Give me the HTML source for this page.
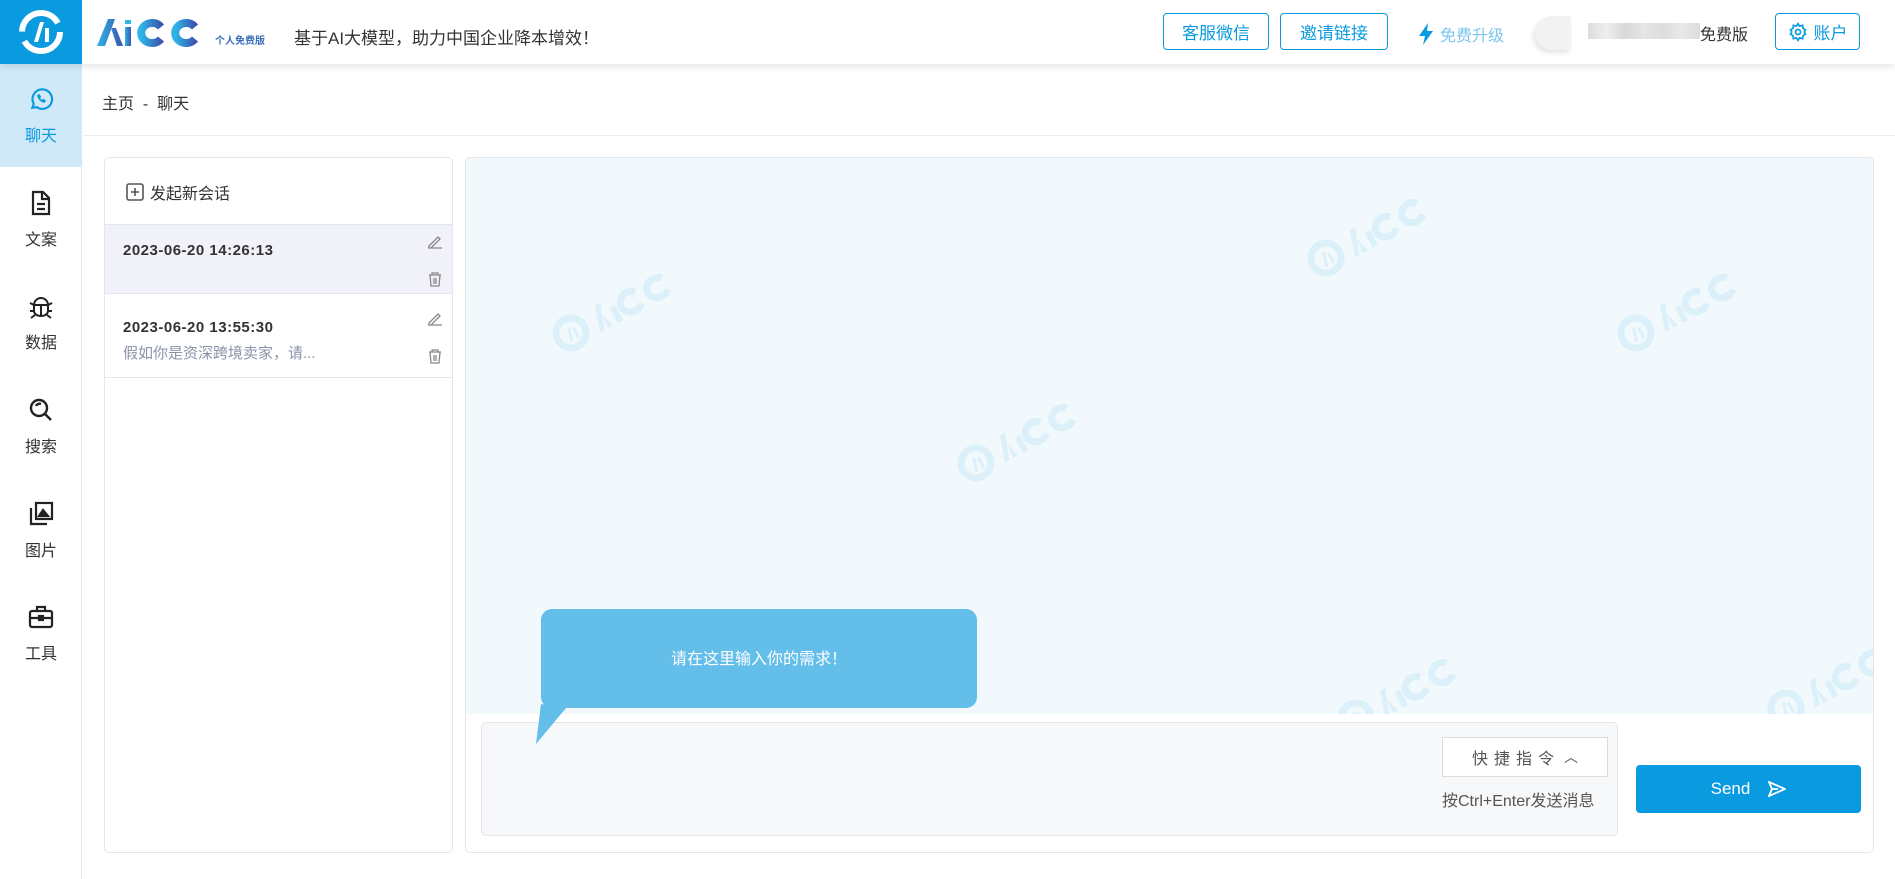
<!DOCTYPE html>
<html><head><meta charset="utf-8">
<style>
*{margin:0;padding:0;box-sizing:border-box}
body{width:1895px;height:879px;overflow:hidden;background:#fff;font-family:"Liberation Sans","Noto Sans CJK SC",sans-serif;color:#333;position:relative}
.abs{position:absolute}
.hdr{left:0;top:0;width:1895px;height:64px;background:#fff;box-shadow:0 2px 8px rgba(0,0,0,.12);z-index:5}
.btn{position:absolute;top:13px;height:37px;border:1px solid #0a9ae0;border-radius:4px;color:#0a9ae0;font-size:17px;display:flex;align-items:center;justify-content:center}
.side{left:0;top:64px;width:82px;height:815px;background:#fff;border-right:1px solid #e8e8e8}
.si{position:absolute;left:0;width:82px;text-align:center;font-size:16px;color:#333}
.si svg{display:block;margin:0 auto 10px}
</style></head><body>

<div class="abs hdr">
  <div class="abs" style="left:0;top:0;width:82px;height:64px;background:#0a9ae0">
    <svg width="82" height="64" viewBox="0 0 82 64"><circle cx="41" cy="32" r="19" fill="none" stroke="#fff" stroke-width="6" stroke-dasharray="50 10 50 10"/><path d="M34 42 L40 22 L44 22 L38 42Z M45 28h4v14h-4z" fill="#fff"/></svg>
  </div>
  <svg class="abs" style="left:97px;top:16px" width="112" height="34" viewBox="0 0 112 34">
    <defs><linearGradient id="g" x1="0" x2="1"><stop offset="0" stop-color="#2fb4e6"/><stop offset="1" stop-color="#3b55b0"/></linearGradient></defs>
    <path d="M0 30 L11 3 L18 3 L8 30Z M14 12 L20 30 L26 30 L19 12Z" fill="url(#g)"/>
    <rect x="28" y="4" width="6" height="4" fill="#2fb4e6"/><rect x="28" y="11" width="6" height="19" fill="url(#g)"/>
    <path d="M64 11 A11 10 0 1 0 64 23" fill="none" stroke="url(#g)" stroke-width="8"/>
    <path d="M98 11 A11 10 0 1 0 98 23" fill="none" stroke="url(#g)" stroke-width="8"/>
  </svg>
  <div class="abs" style="left:215px;top:32px;font-size:10px;color:#3b6fb8;font-weight:bold">个人免费版</div>
  <div class="abs" style="left:294px;top:24px;font-size:17px;color:#333">基于AI大模型，助力中国企业降本增效！</div>
  <div class="btn" style="left:1163px;width:106px">客服微信</div>
  <div class="btn" style="left:1280px;width:108px">邀请链接</div>
  <div class="abs" style="left:1418px;top:22px;font-size:16px;color:#7cc6ee;display:flex;align-items:center"><svg width="16" height="22" viewBox="0 0 16 22"><path d="M10 0 L1 13 H7 L5 22 L15 8 H9Z" fill="#0a9ae0"/></svg><span style="margin-left:6px">免费升级</span></div>
  <div class="abs" style="left:1535px;top:16px;width:36px;height:34px;border-radius:17px 0 0 17px;background:#f2f2f2;box-shadow:-2px 3px 5px rgba(0,0,0,.1)"></div>
  <div class="abs" style="left:1588px;top:23px;width:112px;height:16px;background:linear-gradient(90deg,#ddd,#eee,#d8d8d8,#e6e6e6,#ddd,#e8e8e8,#ddd)"></div>
  <div class="abs" style="left:1700px;top:21px;font-size:16px;color:#333">免费版</div>
  <div class="btn" style="left:1775px;width:85px"><svg width="20" height="20" viewBox="0 0 24 24" fill="none" stroke="#0a9ae0" stroke-width="2"><circle cx="12" cy="12" r="3"/><path d="M12 2l2 3 3.5-1 .5 3.5 3 2-1.5 2.5 1.5 2.5-3 2-.5 3.5-3.5-1-2 3-2-3-3.5 1-.5-3.5-3-2L4.5 12 3 9.5l3-2L6.5 4 10 5z"/></svg><span style="margin-left:6px">账户</span></div>
</div>

<div class="abs side">
  <div class="abs" style="left:0;top:0;width:82px;height:103px;background:#cfe9f8"></div>
  <div class="si" style="top:22px;color:#0a9ae0"><svg width="26" height="26" viewBox="0 0 24 24" fill="none" stroke="#0a9ae0" stroke-width="2"><path d="M4 20l1.3-3.5A9 9 0 1 1 8 19.5Z"/><path d="M9 8.5c0 3 3 6 6 6.5l1-1.5-2-1-1 1c-1-.5-2-1.5-2.5-2.5l1-1-1-2Z" fill="#0a9ae0" stroke-width="1"/></svg>聊天</div>
  <div class="si" style="top:126px"><svg width="24" height="26" viewBox="0 0 24 26" fill="none" stroke="#222" stroke-width="2.2"><path d="M4 2h10l6 6v16H4Z"/><path d="M13 2v7h7M8 14h8M8 19h8"/></svg>文案</div>
  <div class="si" style="top:229px"><svg width="26" height="26" viewBox="0 0 26 26" fill="none" stroke="#222" stroke-width="2"><path d="M6 12a7 7 0 0 1 14 0v6a7 5 0 0 1-14 0Z"/><path d="M6 12h14M13 12v11M2 10l4 2M24 10l-4 2M2 18h4M24 18h-4M3 25l4-3M23 25l-4-3"/></svg>数据</div>
  <div class="si" style="top:333px"><svg width="26" height="26" viewBox="0 0 26 26" fill="none" stroke="#222" stroke-width="2.4"><circle cx="11" cy="11" r="8"/><path d="M17 17l6 6M8 9a4 4 0 0 1 5-2"/></svg>搜索</div>
  <div class="si" style="top:437px"><svg width="26" height="26" viewBox="0 0 26 26" fill="none" stroke="#222" stroke-width="2.2"><rect x="8" y="2" width="16" height="16"/><path d="M3 7v16h16"/><path d="M11 15l4-6 5 6Z" fill="#222"/></svg>图片</div>
  <div class="si" style="top:540px"><svg width="26" height="26" viewBox="0 0 26 26" fill="none" stroke="#222" stroke-width="2.2"><rect x="2" y="7" width="22" height="16" rx="2"/><path d="M9 7V3h8v4M2 14h22"/><rect x="11" y="12" width="4" height="4" fill="#222"/></svg>工具</div>
</div>

<div class="abs" style="left:102px;top:90px;font-size:16px;color:#333">主页 &nbsp;-&nbsp; 聊天</div>
<div class="abs" style="left:83px;top:135px;width:1812px;height:1px;background:#eee"></div>

<div class="abs" style="left:104px;top:157px;width:349px;height:696px;border:1px solid #e6e6ea;border-radius:5px;overflow:hidden">
  <div class="abs" style="left:21px;top:22px;font-size:16px;color:#333;display:flex;align-items:center"><svg width="18" height="18" viewBox="0 0 18 18" fill="none" stroke="#555" stroke-width="1.6"><rect x="1" y="1" width="16" height="16" rx="2"/><path d="M9 5v8M5 9h8"/></svg><span style="margin-left:6px">发起新会话</span></div>
  <div class="abs" style="left:0;top:66px;width:349px;height:70px;background:#f0f1f9;border-top:1px solid #e4e5ee;border-bottom:1px solid #e4e5ee"></div>
  <div class="abs" style="left:18px;top:84px;font-size:15px;font-weight:bold;color:#333;letter-spacing:.5px">2023-06-20 14:26:13</div>
  <div class="abs" style="left:18px;top:161px;font-size:15px;font-weight:bold;color:#333;letter-spacing:.5px">2023-06-20 13:55:30</div>
  <div class="abs" style="left:18px;top:184px;font-size:15px;color:#8a93a8">假如你是资深跨境卖家，请...</div>
  <div class="abs" style="left:0;top:219px;width:349px;height:1px;background:#e4e5ee"></div>
  <svg class="abs" style="left:321px;top:75px" width="18" height="80" viewBox="0 0 16 80" fill="none" stroke="#888" stroke-width="1.3">
    <path d="M2 13l9-9 2 2-9 9H2Z M1 15h14"/><path d="M2 42h12M5 42v-2h6v2M3 42l1 11h8l1-11M7 45v6M9 45v6"/>
  </svg>
  <svg class="abs" style="left:321px;top:152px" width="18" height="80" viewBox="0 0 16 80" fill="none" stroke="#888" stroke-width="1.3">
    <path d="M2 13l9-9 2 2-9 9H2Z M1 15h14"/><path d="M2 42h12M5 42v-2h6v2M3 42l1 11h8l1-11M7 45v6M9 45v6"/>
  </svg>
</div>

<div class="abs" style="left:465px;top:157px;width:1409px;height:696px;border:1px solid #e6e6ea;border-radius:5px;overflow:hidden;background:#fff">
  <div class="abs" style="left:0;top:0;width:1409px;height:556px;background:#f1f9fc"></div>
  <svg class="abs" style="left:0;top:0" width="1409" height="556" viewBox="0 0 1409 556">
    <defs><g id="w" fill="#dcf0fa"><circle cx="0" cy="0" r="15" fill="none" stroke="#dcf0fa" stroke-width="7"/><path d="M-5 8l4-14h3l-4 14Z M3 -4h3v12h-3Z"/><path d="M26 13L34-13h6L31 13Z M36-2l5 15h-6Z"/><rect x="46" y="-4" width="6" height="17"/><path d="M76-6a11 10 0 1 0 0 13" fill="none" stroke="#dcf0fa" stroke-width="7"/><path d="M106-6a11 10 0 1 0 0 13" fill="none" stroke="#dcf0fa" stroke-width="7"/></g></defs>
    <use href="#w" transform="translate(105,175) rotate(-28)"/>
    <use href="#w" transform="translate(860,100) rotate(-28)"/>
    <use href="#w" transform="translate(1170,175) rotate(-28)"/>
    <use href="#w" transform="translate(510,305) rotate(-28)"/>
    <use href="#w" transform="translate(890,560) rotate(-28)"/>
    <use href="#w" transform="translate(1320,550) rotate(-28)"/>
  </svg>
  <div class="abs" style="left:15px;top:564px;width:1137px;height:114px;background:#f7f8fa;border:1px solid #e6e6ea;border-radius:5px"></div>
  <div class="abs" style="left:976px;top:579px;width:166px;height:40px;background:#fff;border:1px solid #ddd;font-size:16px;color:#555;letter-spacing:6px;display:flex;align-items:center;justify-content:center">快捷指令 <span style="letter-spacing:0;margin-left:4px;font-size:14px">︿</span></div>
  <div class="abs" style="left:976px;top:629px;font-size:16px;color:#555">按Ctrl+Enter发送消息</div>
  <div class="abs" style="left:1170px;top:607px;width:225px;height:48px;background:#0a9ae0;border-radius:4px;color:#fff;font-size:17px;display:flex;align-items:center;justify-content:center">Send<svg style="margin-left:18px" width="18" height="16" viewBox="0 0 18 16" fill="none" stroke="#fff" stroke-width="1.8"><path d="M1 1l16 7-16 7 3-7Z M4 8h6"/></svg></div>
</div>

<svg class="abs" style="left:530px;top:605px" width="455" height="145" viewBox="0 0 455 145"><path d="M11 99 L6 139 L36 103 Z" fill="#63bee9"/><rect x="11" y="4" width="436" height="99" rx="11" fill="#63bee9"/></svg>
<div class="abs" style="left:541px;top:645px;width:436px;text-align:center;color:#fff;font-size:16px">请在这里输入你的需求！</div>

</body></html>
